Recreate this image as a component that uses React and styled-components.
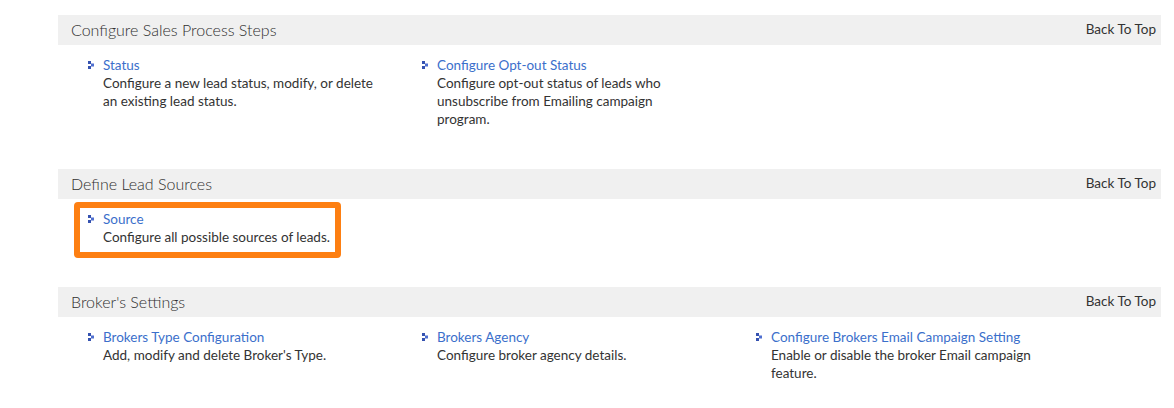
import styled, { createGlobalStyle } from "styled-components";

const GlobalStyle = createGlobalStyle`
  body {
    margin: 0;
    background: #fff;
    font-family: "Lato", "Open Sans", sans-serif;
    color: #333;
  }
`;

const Page = styled.div`
  padding: 15px 13px 0 58px;
`;

const Section = styled.section``;

const SectionHeader = styled.div`
  display: flex;
  justify-content: space-between;
  align-items: center;
  height: 30px;
  padding: 0 5px 2px 13px;
  box-sizing: border-box;
  background: #f0f0f0;
`;

const SectionTitle = styled.h2`
  margin: 0;
  font-size: 16px;
  font-weight: 300;
  color: #2f2f2f;
`;

const BackToTop = styled.a`
  font-size: 13.5px;
  color: #333;
  text-decoration: none;
  cursor: pointer;
`;

const Items = styled.div`
  display: grid;
  grid-template-columns: repeat(3, 334px);
  padding: ${(p) => (p.last ? "11px 0 0 16px" : "11px 0 41px 16px")};
`;

const Item = styled.div`
  position: relative;
  display: flex;
  gap: 8px;
  padding-left: 14px;

  ${(p) =>
    p.highlight &&
    `
    &::after {
      content: "";
      position: absolute;
      left: 0;
      top: -8px;
      width: 255px;
      height: 44px;
      border: 6px solid #fd7f12;
      border-radius: 4px;
      pointer-events: none;
    }
  `}
`;

const Bullet = styled.svg`
  flex: none;
  width: 7px;
  height: 8px;
  margin-top: 5px;
`;

const ItemBody = styled.div`
  max-width: 270.5px;
  font-size: 13.5px;
  line-height: 18px;
`;

const ItemLink = styled.a`
  display: block;
  color: #3b6fcb;
  text-decoration: none;
  cursor: pointer;
`;

const ItemText = styled.div`
  color: #333;
`;

const sections = [
  {
    title: "Configure Sales Process Steps",
    items: [
      {
        name: "Status",
        text: "Configure a new lead status, modify, or delete an existing lead status.",
      },
      {
        name: "Configure Opt-out Status",
        text: "Configure opt-out status of leads who unsubscribe from Emailing campaign program.",
      },
    ],
  },
  {
    title: "Define Lead Sources",
    items: [
      {
        name: "Source",
        text: "Configure all possible sources of leads.",
        highlight: true,
      },
    ],
  },
  {
    title: "Broker's Settings",
    items: [
      {
        name: "Brokers Type Configuration",
        text: "Add, modify and delete Broker's Type.",
      },
      { name: "Brokers Agency", text: "Configure broker agency details." },
      {
        name: "Configure Brokers Email Campaign Setting",
        text: "Enable or disable the broker Email campaign feature.",
      },
    ],
  },
];

function ArrowBullet() {
  return (
    <Bullet viewBox="0 0 7 8">
      <rect x="0" y="0" width="3" height="3" fill="#3552b0" />
      <rect x="3" y="2.5" width="3" height="3" fill="#4f6fd0" />
      <rect x="0" y="5" width="3" height="3" fill="#3552b0" />
    </Bullet>
  );
}

export default function App() {
  return (
    <Page>
      <GlobalStyle />
      {sections.map((section, i) => (
        <Section key={section.title}>
          <SectionHeader>
            <SectionTitle>{section.title}</SectionTitle>
            <BackToTop>Back To Top</BackToTop>
          </SectionHeader>
          <Items last={i === sections.length - 1}>
            {section.items.map((item) => (
              <Item key={item.name} highlight={item.highlight}>
                <ArrowBullet />
                <ItemBody>
                  <ItemLink>{item.name}</ItemLink>
                  <ItemText>{item.text}</ItemText>
                </ItemBody>
              </Item>
            ))}
          </Items>
        </Section>
      ))}
    </Page>
  );
}
